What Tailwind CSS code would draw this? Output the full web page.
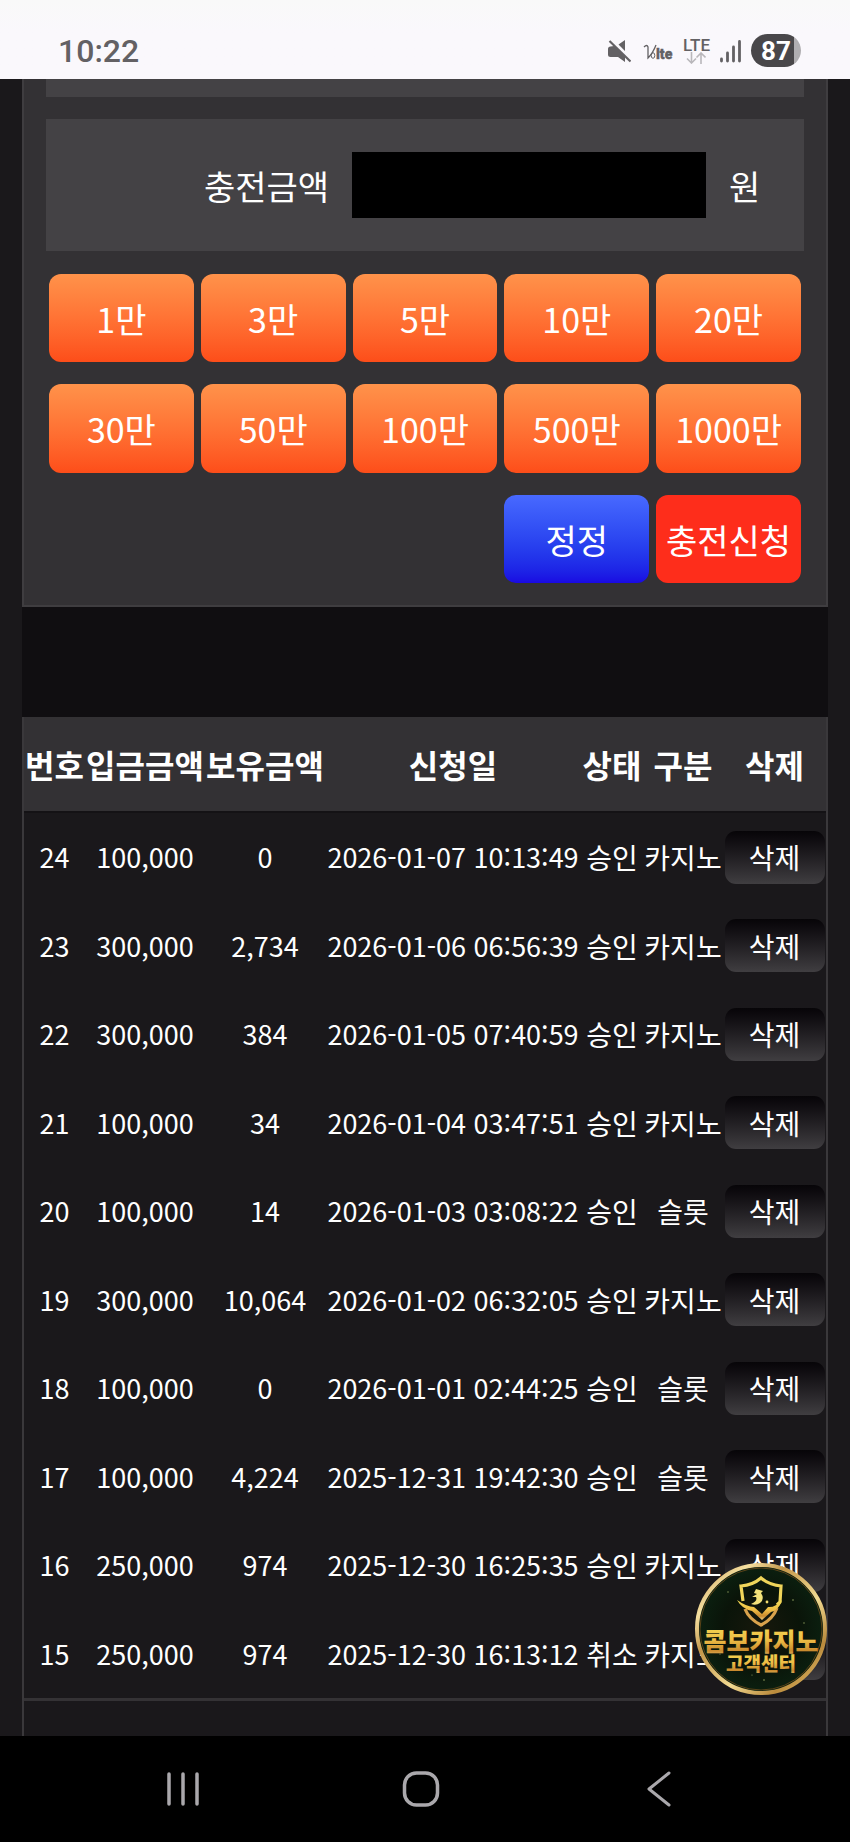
<!DOCTYPE html>
<html lang="ko">
<head>
<meta charset="utf-8">
<meta name="viewport" content="width=device-width, initial-scale=1">
<title>충전신청</title>
<script src="https://cdn.jsdelivr.net/npm/@tailwindcss/browser@4"></script>
</head>
<body class="relative flex min-h-screen flex-col bg-[#1a181b] font-['Noto_Sans_CJK_KR',sans-serif] text-white">

<header class="flex h-[79px] shrink-0 items-center justify-between bg-linear-to-b from-[#f9f9f9] to-[#faf8fc] to-40% pt-[22px] pr-[49px] pl-[58px] font-[Roboto,sans-serif] text-[#636164]">
  <time class="text-[32px] leading-none font-medium">10:22</time>
  <div class="flex items-center">
    <svg class="mr-3 h-6 w-6" viewBox="0 0 24 24" aria-label="무음">
      <path fill="#636164" d="M11.500 5.500L18 1v11ZM1 10q0-2.500 2.500-2.500L7 7L18 17.500V23L11 18H3.500Q1 18 1 15.500Z"/>
      <path d="M2.500 2L23.500 22.500" stroke="#636164" stroke-width="2.200"/>
    </svg>
    <svg class="mr-2 h-6 w-8" viewBox="0 0 32 24" aria-label="VoLTE">
      <path d="M1 8q3-3 4 0v11Q10 14 13 6" fill="none" stroke="#636164" stroke-width="1.300"/>
      <ellipse cx="10" cy="16.500" rx="1.800" ry="2.800" fill="none" stroke="#636164"/>
      <text x="13" y="20" font-family="Roboto,sans-serif" font-weight="900" font-size="14" fill="#636164" stroke="#636164" stroke-width=".4">lte</text>
    </svg>
    <div class="mr-[10px] flex flex-col items-center">
      <span class="text-[17px] leading-[14px] font-medium">LTE</span>
      <svg class="h-3 w-5" viewBox="0 0 20 12" fill="none" stroke="#b9b7bb" stroke-width="1.600"><path d="M5.500 0v11M1 6.500l4.500 4.500L10 6.500M15 12V1M10.500 5.500L15 1l4.500 4.500"/></svg>
    </div>
    <svg class="mr-[9px] h-6 w-[22px]" viewBox="0 0 22 24" stroke="#636164" stroke-width="2.800" stroke-linecap="round" aria-label="신호"><path d="M1.500 20v2M7.500 14v8M13.500 8v14M19.500 2.500v19.500"/></svg>
    <div class="flex h-[33px] w-[50px] items-center justify-center rounded-full bg-linear-to-r from-[#49474a] from-86% to-[#b0aeb1] to-86% text-[26px] leading-none font-bold text-white">87</div>
  </div>
</header>

<main class="flex-1 px-[22px]">
  <form class="border-x-2 border-b-2 border-[#3f3d40] bg-[#333134] px-[22px] pb-[22px] text-[34px]">
    <div class="h-[18px] bg-[#444245]"></div>
    <div class="mt-[22px] grid h-[132px] grid-cols-[306fr_354fr_98fr] items-center bg-[#444245]">
      <label for="amount" class="pt-[2px] pr-[23px] text-right leading-[50px]">충전금액</label>
      <input id="amount" type="text" inputmode="numeric" class="h-[66px] w-full min-w-0 bg-black px-4 text-white">
      <span class="pt-[2px] pl-[23px] leading-[50px]">원</span>
    </div>
    <div class="mt-[23px] grid grid-cols-5 grid-rows-[88px_89px_88px] gap-x-[7px] gap-y-[22px] px-[3px] [&_button]:rounded-[12px] [&_button]:whitespace-nowrap">
      <button type="button" class="bg-linear-to-b from-[#ff924a] to-[#fd4d19]">1만</button>
      <button type="button" class="bg-linear-to-b from-[#ff924a] to-[#fd4d19]">3만</button>
      <button type="button" class="bg-linear-to-b from-[#ff924a] to-[#fd4d19]">5만</button>
      <button type="button" class="bg-linear-to-b from-[#ff924a] to-[#fd4d19]">10만</button>
      <button type="button" class="bg-linear-to-b from-[#ff924a] to-[#fd4d19]">20만</button>
      <button type="button" class="bg-linear-to-b from-[#ff924a] to-[#fd4d19]">30만</button>
      <button type="button" class="bg-linear-to-b from-[#ff924a] to-[#fd4d19]">50만</button>
      <button type="button" class="bg-linear-to-b from-[#ff924a] to-[#fd4d19]">100만</button>
      <button type="button" class="bg-linear-to-b from-[#ff924a] to-[#fd4d19]">500만</button>
      <button type="button" class="bg-linear-to-b from-[#ff924a] to-[#fd4d19]">1000만</button>
      <button type="reset" class="col-start-4 bg-linear-to-b from-[#4869ff] to-[#1a08e2]">정정</button>
      <button type="submit" class="bg-[#fe2d1b]">충전신청</button>
    </div>
  </form>

  <div class="h-[110px] bg-[#100e11]"></div>

  <section class="border-x-2 border-[#3a383b]">
    <table class="w-full table-fixed border-separate border-spacing-0 text-center text-[28px] leading-[40px] whitespace-nowrap [&_button]:block [&_button]:mx-auto [&_button]:h-[53px] [&_button]:w-[100px] [&_button]:rounded-[11px] [&_button]:bg-linear-to-b [&_button]:from-[#070508] [&_button]:to-[#403e41] [&_td]:p-0 [&_th]:p-0 [&_td:nth-child(-n+4)]:text-[27px]">
      <colgroup><col class="w-[61px]"><col class="w-[120px]"><col class="w-[120px]"><col class="w-[256px]"><col class="w-[62px]"><col class="w-[80px]"><col class="w-[103px]"></colgroup>
      <thead class="bg-[#333134] text-[32px] font-bold">
        <tr class="h-[96px] [&_th]:border-b-2 [&_th]:border-[#141215]"><th>번호</th><th>입금금액</th><th>보유금액</th><th>신청일</th><th>상태</th><th>구분</th><th>삭제</th></tr>
      </thead>
      <tbody>
        <tr class="odd:h-[88px] even:h-[89px]"><td>24</td><td>100,000</td><td>0</td><td>2026-01-07 10:13:49</td><td>승인</td><td>카지노</td><td><button type="button">삭제</button></td></tr>
        <tr class="odd:h-[88px] even:h-[89px]"><td>23</td><td>300,000</td><td>2,734</td><td>2026-01-06 06:56:39</td><td>승인</td><td>카지노</td><td><button type="button">삭제</button></td></tr>
        <tr class="odd:h-[88px] even:h-[89px]"><td>22</td><td>300,000</td><td>384</td><td>2026-01-05 07:40:59</td><td>승인</td><td>카지노</td><td><button type="button">삭제</button></td></tr>
        <tr class="odd:h-[88px] even:h-[89px]"><td>21</td><td>100,000</td><td>34</td><td>2026-01-04 03:47:51</td><td>승인</td><td>카지노</td><td><button type="button">삭제</button></td></tr>
        <tr class="odd:h-[88px] even:h-[89px]"><td>20</td><td>100,000</td><td>14</td><td>2026-01-03 03:08:22</td><td>승인</td><td>슬롯</td><td><button type="button">삭제</button></td></tr>
        <tr class="odd:h-[88px] even:h-[89px]"><td>19</td><td>300,000</td><td>10,064</td><td>2026-01-02 06:32:05</td><td>승인</td><td>카지노</td><td><button type="button">삭제</button></td></tr>
        <tr class="odd:h-[88px] even:h-[89px]"><td>18</td><td>100,000</td><td>0</td><td>2026-01-01 02:44:25</td><td>승인</td><td>슬롯</td><td><button type="button">삭제</button></td></tr>
        <tr class="odd:h-[88px] even:h-[89px]"><td>17</td><td>100,000</td><td>4,224</td><td>2025-12-31 19:42:30</td><td>승인</td><td>슬롯</td><td><button type="button">삭제</button></td></tr>
        <tr class="odd:h-[88px] even:h-[89px]"><td>16</td><td>250,000</td><td>974</td><td>2025-12-30 16:25:35</td><td>승인</td><td>카지노</td><td><button type="button">삭제</button></td></tr>
        <tr class="odd:h-[88px] even:h-[89px]"><td>15</td><td>250,000</td><td>974</td><td>2025-12-30 16:13:12</td><td>취소</td><td>카지노</td><td><button type="button">삭제</button></td></tr>
      </tbody>
    </table>
    <div class="h-[38px] border-t-3 border-[#343235]"></div>
  </section>
</main>

<a href="#" aria-label="콤보카지노 고객센터" class="absolute right-[23px] bottom-[147px] block size-[132px]">
  <svg class="size-full" viewBox="0 0 132 132">
    <defs>
      <linearGradient id="rim" x1="0" y1="0" x2="1" y2="1">
        <stop offset="0" stop-color="#c89a51"/><stop offset=".2" stop-color="#f5dfa0"/><stop offset=".35" stop-color="#c4974a"/><stop offset=".6" stop-color="#f2da91"/><stop offset=".8" stop-color="#b98a3c"/><stop offset="1" stop-color="#f0cd78"/>
      </linearGradient>
      <linearGradient id="gold" x1="0" y1="0" x2="0" y2="1">
        <stop offset="0" stop-color="#f3dd55"/><stop offset=".5" stop-color="#eebd45"/><stop offset=".8" stop-color="#c98a2e"/><stop offset="1" stop-color="#f0d080"/>
      </linearGradient>
      <radialGradient id="felt" cx=".5" cy=".5" r=".5">
        <stop offset="0" stop-color="#17180c"/><stop offset=".6" stop-color="#0a1409"/><stop offset="1" stop-color="#0b2010"/>
      </radialGradient>
    </defs>
    <circle cx="66" cy="66" r="64" fill="url(#felt)" stroke="url(#rim)" stroke-width="4"/>
    <circle cx="66" cy="66" r="61" fill="none" stroke="#5a4318" stroke-width="1"/>
    <g fill="#90a05e"><circle cx="98" cy="37" r=".8"/><circle cx="33" cy="29" r=".7"/><circle cx="69" cy="117" r=".8"/><circle cx="109" cy="60" r=".7"/><circle cx="25" cy="91" r=".6"/><circle cx="57" cy="112" r=".6"/></g>
    <g fill="none" stroke="#f0d55a" stroke-width="3.200" stroke-linejoin="miter">
      <path d="M48 38L46 23Q58 22 66 15Q74 22 86 23L85 39L82 42"/>
      <path stroke="#d9a24c" d="M50 46Q54 56 66 62Q78 56 82 45"/>
    </g>
    <path fill="url(#gold)" d="M42 37Q52 44 59 44L67 51L73 44Q80 45 87 37Q84 47 76 49L67 57L57 48Q47 46 42 37Z"/>
    <path fill="#f3e27a" d="M61 26L68 28L66 30Q70 36 65 40Q61 43 56 41Q63 38 61 34L57 34L62 31L59 30Z"/>
    <circle cx="72" cy="39" r="1.400" fill="#f3dc6e"/>
    <g font-family="'Noto Sans CJK KR',sans-serif" font-weight="900" text-anchor="middle" fill="url(#gold)">
      <text x="66" y="88" font-size="25">콤보카지노</text>
      <text x="66" y="108" font-size="19">고객센터</text>
    </g>
  </svg>
</a>

<nav aria-label="시스템 탐색" class="flex h-[106px] shrink-0 items-center justify-center gap-[198px] bg-black pr-2">
  <button type="button" aria-label="최근 앱" class="h-10 w-10"><svg class="size-10" viewBox="0 0 40 40" stroke="#aaa8ac" stroke-width="3.500" stroke-linecap="round"><path d="M6 5v30M20 5v30M34 5v30"/></svg></button>
  <button type="button" aria-label="홈" class="h-10 w-10"><svg class="size-10" viewBox="0 0 40 40" fill="none" stroke="#aaa8ac" stroke-width="3.500"><rect x="3.500" y="4" width="33" height="32" rx="12"/></svg></button>
  <button type="button" aria-label="뒤로" class="h-10 w-10"><svg class="size-10" viewBox="0 0 40 40" fill="none" stroke="#aaa8ac" stroke-width="3" stroke-linecap="round" stroke-linejoin="round"><path d="M30 4L10 20L30 36"/></svg></button>
</nav>
</body>
</html>
